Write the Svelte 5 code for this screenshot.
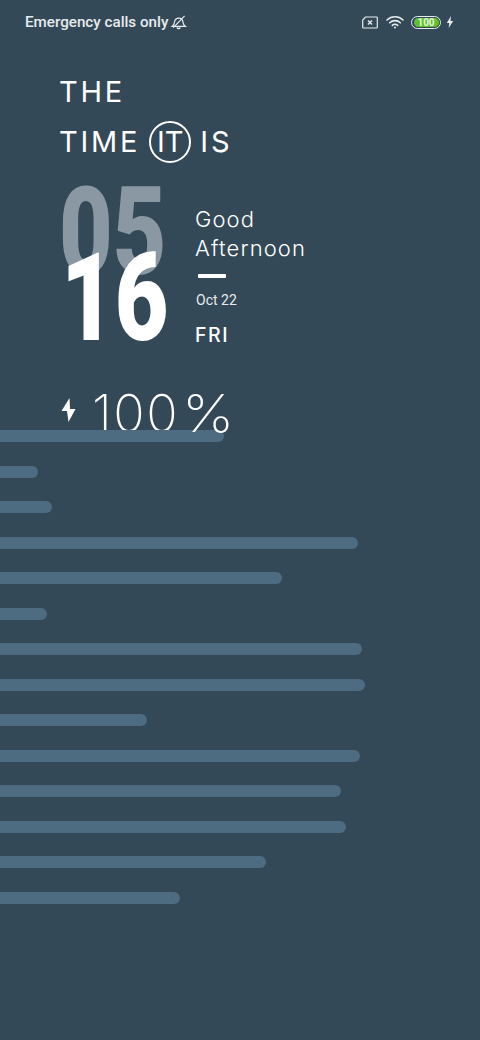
<script>
  // lock screen clock: status bar, headline, stacked hour/minute, battery and the usage bars
  const bars = [224, 38, 52, 358, 282, 47, 362, 365, 147, 360, 341, 346, 266, 180];
</script>

<div class="screen">
  <header class="status">
    <div class="left">
      <span class="carrier">Emergency calls only</span>
      <svg class="bell" viewBox="0 0 18 18" width="17" height="17" fill="none" stroke="#e6ebee" stroke-width="1.3">
        <path d="M2.500 13c1.500-1 2-2.600 2.200-4.300C5 6 7 4.300 9.300 4.300c2.300 0 4.200 1.800 4.400 4.200.2 1.800.6 3.300 2.300 4.500z" />
        <path d="M7.500 14.300c.4 1.500 2.800 1.500 3.300 0" stroke-width="1.600" />
        <path d="M3.500 14.500 15.500 2" />
      </svg>
    </div>
    <div class="right">
      <svg class="sim" viewBox="0 0 16 13" width="16" height="13" fill="none" stroke="#e6ebee" stroke-width="1.200">
        <path d="M3.500 1H14.500a.8.8 0 0 1 .8.8v9.400a.8.8 0 0 1-.8.800H1.500a.8.8 0 0 1-.8-.800V4z" />
        <path d="M6 4.500l4 4m0-4l-4 4" stroke-width="1.400" />
      </svg>
      <svg class="wifi" viewBox="0 0 18 14" width="18" height="14" fill="none" stroke="#e6ebee" stroke-width="1.600" stroke-linecap="round">
        <path d="M1 5a11.500 11.500 0 0 1 16 0" />
        <path d="M3.700 7.800a7.600 7.600 0 0 1 10.600 0" />
        <path d="M6.300 10.400a3.900 3.900 0 0 1 5.400 0" />
        <circle cx="9" cy="12.500" r="1" fill="#e6ebee" stroke="none" />
      </svg>
      <div class="batt"><span>100</span></div>
      <svg class="charge" viewBox="0 0 8 12" width="8" height="12"><path d="M5 0 .8 6.900h2.500L2.600 12 7.200 4.900H4.500z" fill="#e6ebee" /></svg>
    </div>
  </header>

  <main class="content">
    <div class="headline">
      <div class="line">THE</div>
      <div class="line">TIME<span class="ring">IT</span>IS</div>
    </div>

    <div class="clock">
      <div class="digits">
        <div class="hour">05</div>
        <div class="minute">16</div>
      </div>
      <div class="side">
        <div class="greet">Good<br />Afternoon</div>
        <div class="dash"></div>
        <div class="date">Oct 22</div>
        <div class="day">FRI</div>
      </div>
    </div>

    <div class="level">
      <svg viewBox="0 0 14 24" width="15" height="24"><path d="M8 0 0 13h5.500L7 24l7-13H8.500z" fill="#fff" /></svg>
      <span>100<i>%</i></span>
    </div>
  </main>

  <div class="bars">
    {#each bars as w}
      <div class="bar" style="width: {w}px"></div>
    {/each}
  </div>
</div>

<style>
  :global(body) { margin: 0; background: #344957; }
  .screen { width: 480px; height: 1040px; background: #344957; overflow: hidden; color: #fff; font-family: Roboto, "Liberation Sans", sans-serif; }

  .status { height: 44px; padding: 0 25px; display: flex; justify-content: space-between; align-items: center; box-sizing: border-box; }
  .left { display: flex; align-items: center; gap: 2px; }
  .carrier { font-size: 15.200px; font-weight: 500; color: #e6ebee; }
  .right { display: flex; align-items: center; gap: 7px; margin-right: 1px; }
  .sim { margin-right: 1px; }
  .batt { width: 30px; height: 13px; border: 1.200px solid #e6ebee; border-radius: 7px; box-sizing: border-box; display: flex; align-items: center; justify-content: center; }
  .batt span { display: block; width: 25px; height: 9px; line-height: 9px; background: #5cc12c; border-radius: 5px; font-size: 10px; font-weight: 700; color: #e8f5df; text-align: center; }
  .charge { margin-left: -2px; }

  .content { padding: 23px 0 0 60px; }
  .headline { font-family: Inter, sans-serif; font-weight: 400; font-size: 29px; letter-spacing: 2.800px; margin-left: -1px; }
  .line { height: 50px; line-height: 50px; display: flex; align-items: center; white-space: pre; }
  .ring { width: 42px; height: 42px; margin: 0 9px 0 9px; border: 2px solid #fff; border-radius: 50%; box-sizing: border-box; display: flex; align-items: center; justify-content: center; letter-spacing: 0; }

  .clock { display: flex; margin-top: 17px; }
  .digits { width: 136px; display: grid; }
  .hour, .minute { grid-area: 1 / 1; font-weight: 900; font-size: 122px; line-height: 90px; height: 90px; transform-origin: 0 0; transform: scaleX(0.76); }
  .hour { color: #8a98a3; margin-top: 4px; margin-left: -1px; }
  .minute { color: #fff; margin-top: 70px; margin-left: 1px; }
  .side { margin-top: 21px; }
  .greet { font-family: Inter, sans-serif; font-weight: 300; font-size: 22px; line-height: 29px; letter-spacing: 1.100px; margin-left: -1px; }
  .dash { width: 28px; height: 4px; border-radius: 1px; background: #fff; margin: 11px 0 0 2px; }
  .date { font-size: 14px; margin-top: 12px; line-height: 20px; color: #e6ebee; }
  .day { font-family: Inter, sans-serif; font-size: 19.500px; font-weight: 500; letter-spacing: 1.500px; margin-top: 14px; line-height: 22px; margin-left: -1px; }

  .level { display: flex; align-items: center; gap: 16px; margin-top: 38px; height: 60px; }
  .level svg { margin-bottom: 8px; margin-left: 1px; }
  .level span { font-family: Inter, sans-serif; font-weight: 200; font-size: 52px; line-height: 60px; letter-spacing: 1.500px; }
  .level i { display: inline-block; font-style: normal; margin-left: 3px; transform-origin: 0 50%; transform: scaleX(1.13); }

  .bars { margin-top: -14px; display: flex; flex-direction: column; gap: 23.500px; }
  .bar { height: 12px; background: #4d6b81; border-radius: 0 6px 6px 0; }
</style>
